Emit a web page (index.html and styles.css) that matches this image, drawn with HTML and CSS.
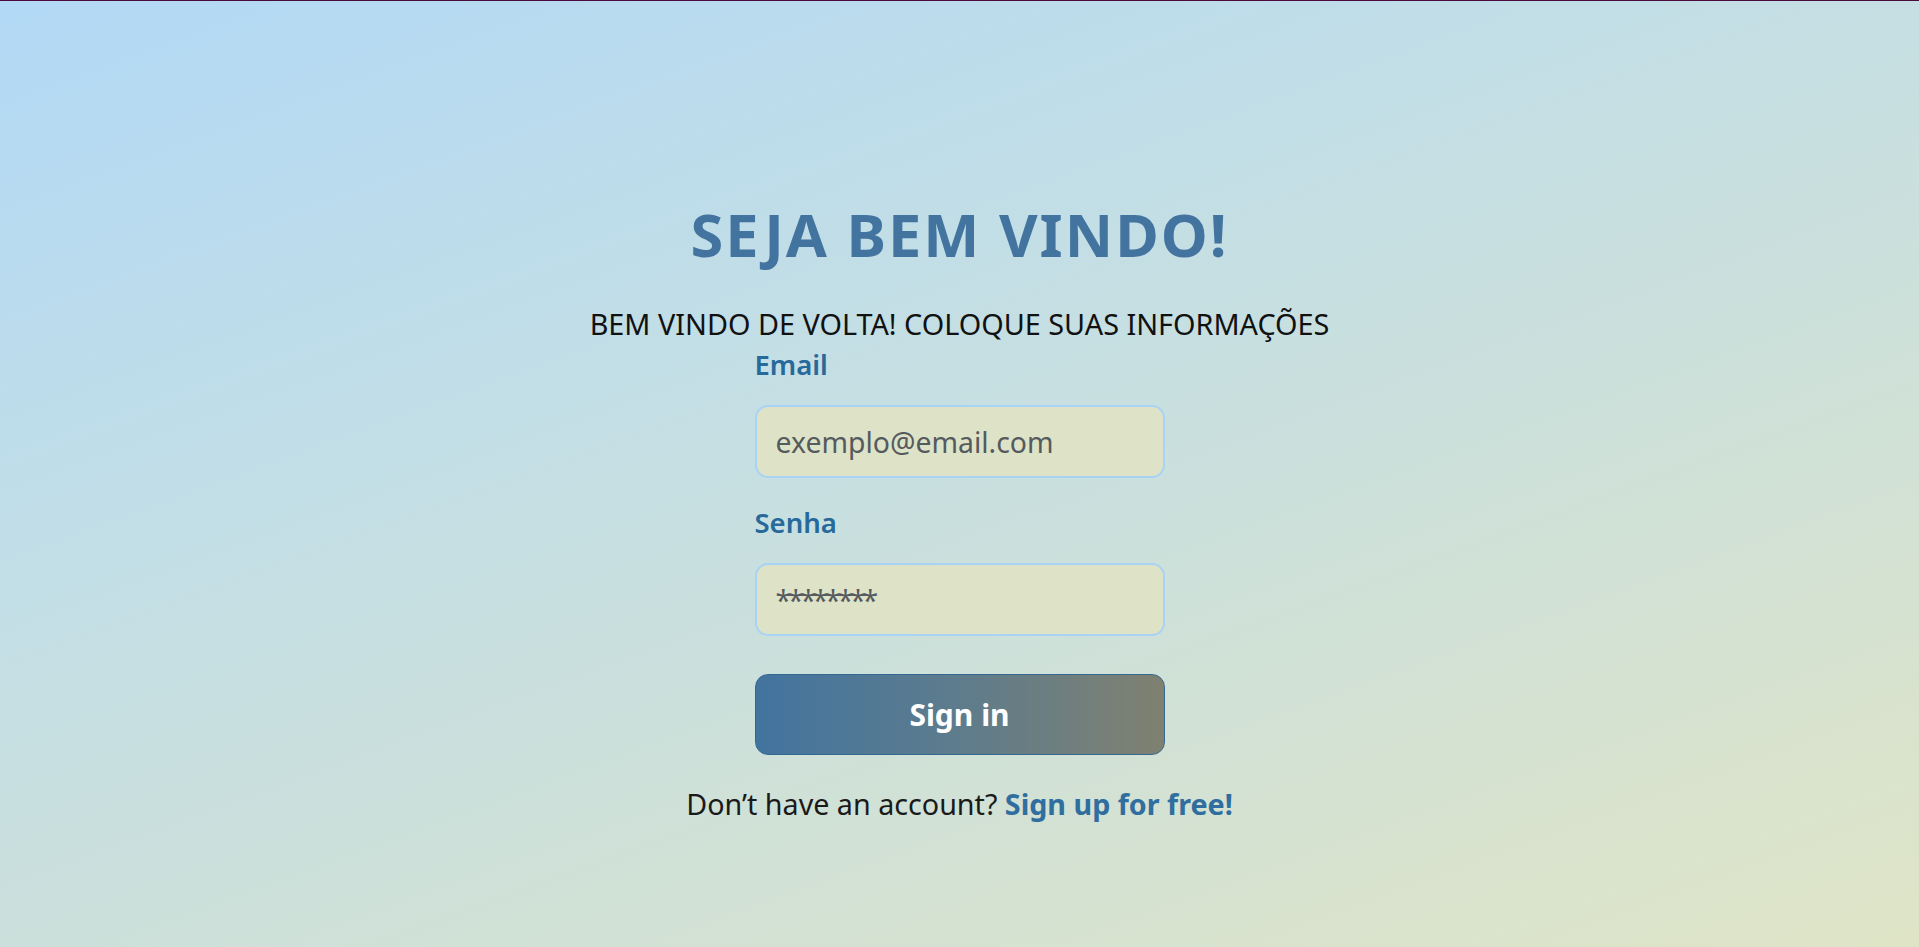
FILE: index.html
```html
<!DOCTYPE html>
<html lang="pt-BR">
<head>
<meta charset="utf-8">
<title>Login</title>
<link rel="stylesheet" href="styles.css">
</head>
<body>
<main class="page">
  <h1 class="title">SEJA BEM VINDO!</h1>
  <p class="subtitle">BEM VINDO DE VOLTA! COLOQUE SUAS INFORMAÇÕES</p>
  <form class="form">
    <label class="label" for="email">Email</label>
    <input class="field" id="email" type="email" placeholder="exemplo@email.com">
    <label class="label label-second" for="senha">Senha</label>
    <input class="field field-pass" id="senha" type="text" placeholder="********">
    <button class="btn" type="button">Sign in</button>
  </form>
  <p class="footer">Don’t have an account? <a class="link" href="#">Sign up for free!</a></p>
</main>
</body>
</html>
```
FILE: styles.css
```css
html, body {
  margin: 0;
  padding: 0;
}
body {
  min-height: 947px;
  box-sizing: border-box;
  border-top: 1px solid #4a0a3c;
  background: linear-gradient(160deg, #b2d9f6 0%, #c6dfe2 45%, #dfe4c6 100%);
  font-family: "Noto Sans", "Open Sans", sans-serif;
}
.page {
  display: flex;
  flex-direction: column;
  align-items: center;
  padding-top: 198px;
}
.title {
  margin: 0;
  font-size: 59.5px;
  line-height: 70px;
  font-weight: 700;
  letter-spacing: 2px;
  color: #4374a0;
}
.subtitle {
  margin: 37px 0 0;
  font-size: 28.8px;
  line-height: 36px;
  color: #111;
}
.form {
  display: flex;
  flex-direction: column;
  width: 410px;
  margin-top: 5px;
}
.label {
  font-size: 27.5px;
  line-height: 36px;
  font-weight: 600;
  color: #27699a;
}
.label-second {
  margin-top: 27px;
}
.field {
  margin-top: 22px;
  box-sizing: border-box;
  height: 73px;
  width: 100%;
  padding: 0 19px;
  border: 2px solid #a9d3f4;
  border-radius: 13px;
  background: #dee3c8;
  font-family: inherit;
  font-size: 28.4px;
  color: #333;
  outline: none;
}
.field::placeholder {
  color: #555a5e;
}
.field-pass::placeholder {
  letter-spacing: -3.2px;
}
.btn {
  margin-top: 38px;
  height: 81px;
  width: 100%;
  border: 1px solid #356890;
  border-radius: 13px;
  background: linear-gradient(90deg, #42749f 0%, #5e7c8c 50%, #7f8170 100%);
  color: #fff;
  font-family: inherit;
  font-size: 30px;
  font-weight: 700;
  cursor: pointer;
}
.footer {
  margin: 31px 0 0;
  font-size: 28.7px;
  line-height: 36px;
  color: #1a1a1a;
}
.link {
  color: #2f6e9e;
  font-weight: 700;
  text-decoration: none;
}
```
